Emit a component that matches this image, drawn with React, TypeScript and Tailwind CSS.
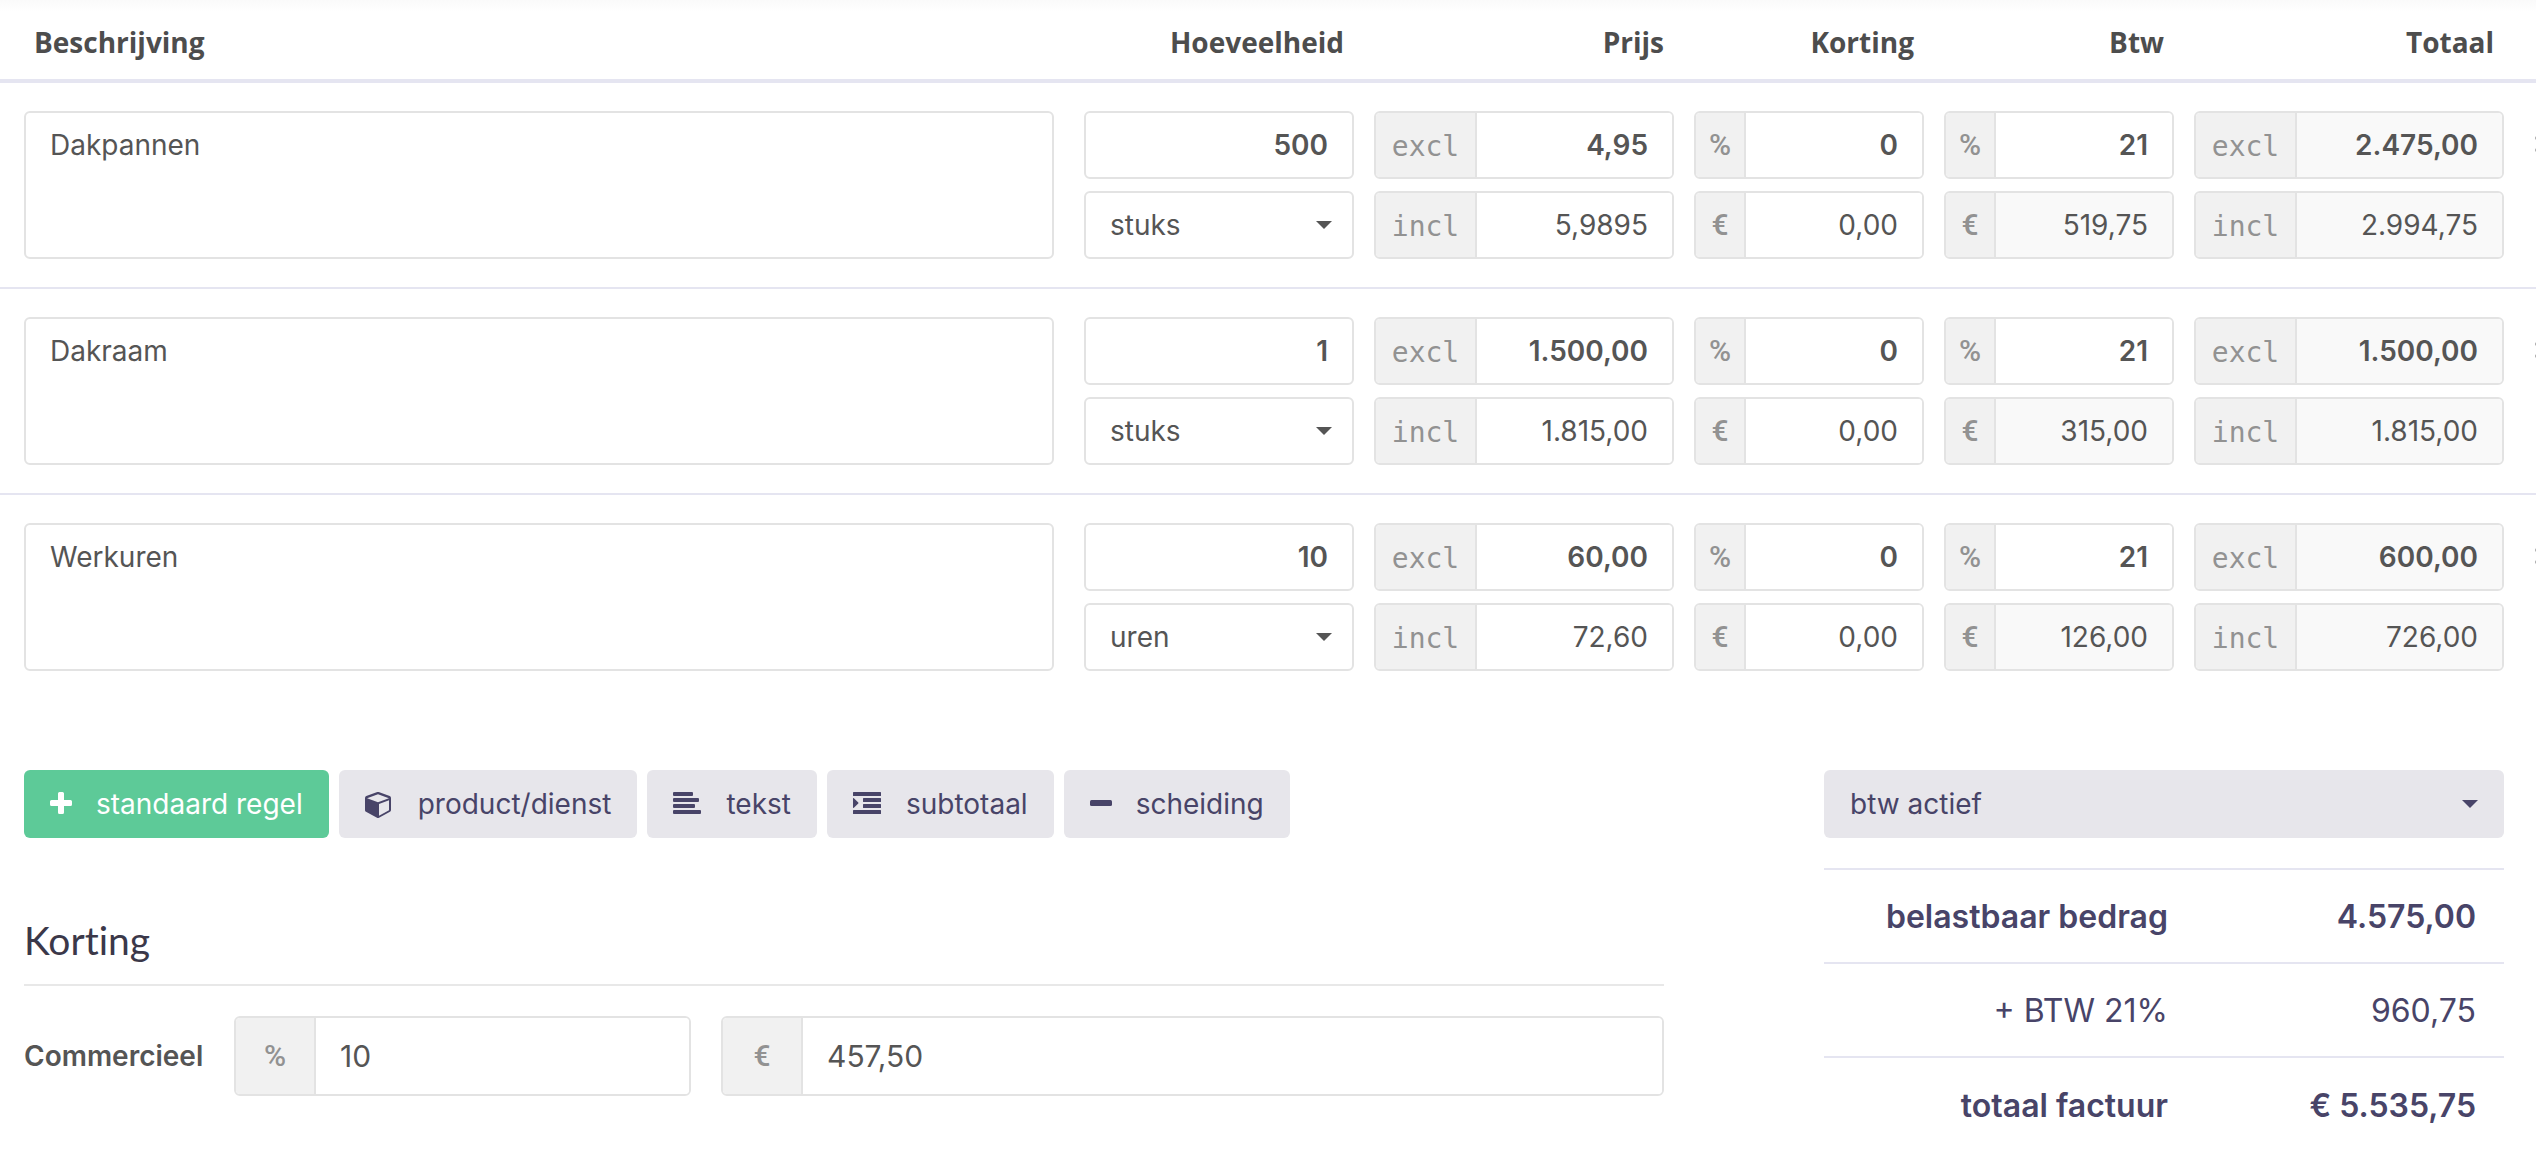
import { useState } from "react";
import clsx from "clsx";

interface ILine {
  id: number;
  description: string;
  quantity: string;
  unit: string;
  priceExcl: string;
  priceIncl: string;
  discountPercent: string;
  discountAmount: string;
  vatPercent: string;
  vatAmount: string;
  totalExcl: string;
  totalIncl: string;
}

const LINES: ILine[] = [
  {
    id: 1,
    description: "Dakpannen",
    quantity: "500",
    unit: "stuks",
    priceExcl: "4,95",
    priceIncl: "5,9895",
    discountPercent: "0",
    discountAmount: "0,00",
    vatPercent: "21",
    vatAmount: "519,75",
    totalExcl: "2.475,00",
    totalIncl: "2.994,75",
  },
  {
    id: 2,
    description: "Dakraam",
    quantity: "1",
    unit: "stuks",
    priceExcl: "1.500,00",
    priceIncl: "1.815,00",
    discountPercent: "0",
    discountAmount: "0,00",
    vatPercent: "21",
    vatAmount: "315,00",
    totalExcl: "1.500,00",
    totalIncl: "1.815,00",
  },
  {
    id: 3,
    description: "Werkuren",
    quantity: "10",
    unit: "uren",
    priceExcl: "60,00",
    priceIncl: "72,60",
    discountPercent: "0",
    discountAmount: "0,00",
    vatPercent: "21",
    vatAmount: "126,00",
    totalExcl: "600,00",
    totalIncl: "726,00",
  },
];

const PlusIcon = () => (
  <svg viewBox="0 1 22 28" className="h-7 w-[22px]" fill="currentColor" aria-hidden="true">
    <path d="M22 12.500v3a1.500 1.500 0 0 1-1.500 1.500H14v6.500a1.500 1.500 0 0 1-1.500 1.500h-3A1.500 1.500 0 0 1 8 23.500V17H1.500A1.500 1.500 0 0 1 0 15.500v-3A1.500 1.500 0 0 1 1.500 11H8V4.500A1.500 1.500 0 0 1 9.500 3h3A1.500 1.500 0 0 1 14 4.500V11h6.500a1.500 1.500 0 0 1 1.500 1.500z" />
  </svg>
);

const CubeIcon = () => (
  <svg viewBox="0 0 29 28" className="h-7 w-[29px]" fill="currentColor" aria-hidden="true">
    <path
      fillRule="evenodd"
      d="M14 25.700 24 20.300V10.300L14 14zM13 12.200 23.900 8.300 13 4.300 2.100 8.300zM26 8v12a2 2 0 0 1-1 1.800l-11 6a2 2 0 0 1-2 0l-11-6A2 2 0 0 1 0 20V8a2 2 0 0 1 1.300-1.900l11-4a2 2 0 0 1 1.400 0l11 4A2 2 0 0 1 26 8z"
    />
  </svg>
);

const AlignLeftIcon = () => (
  <svg viewBox="0 1 29 28" className="h-7 w-[29px]" fill="currentColor" aria-hidden="true">
    <rect x="0" y="3" width="20" height="4" rx="1" />
    <rect x="0" y="9" width="26" height="4" rx="1" />
    <rect x="0" y="15" width="22" height="4" rx="1" />
    <rect x="0" y="21" width="28" height="4" rx="1" />
  </svg>
);

const IndentIcon = () => (
  <svg viewBox="0 1 29 28" className="h-7 w-[29px]" fill="currentColor" aria-hidden="true">
    <rect x="0" y="3" width="28" height="4" rx="0.5" />
    <rect x="10" y="9" width="18" height="4" rx="0.5" />
    <rect x="10" y="15" width="18" height="4" rx="0.5" />
    <rect x="0" y="21" width="28" height="4" rx="0.5" />
    <path d="M5.300 14.400.900 18.800c-.4.400-.9.200-.9-.3v-9c0-.5.500-.7.900-.3l4.400 4.400c.2.200.2.600 0 .8z" />
  </svg>
);

const MinusIcon = () => (
  <svg viewBox="0 1 22 28" className="h-7 w-[22px]" fill="currentColor" aria-hidden="true">
    <rect x="0" y="11" width="22" height="6" rx="1.5" />
  </svg>
);

const ACTIONS = [
  { label: "standaard regel", icon: <PlusIcon />, primary: true },
  { label: "product/dienst", icon: <CubeIcon />, primary: false },
  { label: "tekst", icon: <AlignLeftIcon />, primary: false },
  { label: "subtotaal", icon: <IndentIcon />, primary: false },
  { label: "scheiding", icon: <MinusIcon />, primary: false },
];

const Caret = ({ className }: { className: string }) => (
  <svg
    viewBox="0 0 16 8"
    className={clsx("pointer-events-none absolute top-1/2 h-2 w-4 -translate-y-1/2", className)}
    fill="currentColor"
    aria-hidden="true"
  >
    <path d="M0 0h16L8 8z" />
  </svg>
);

interface IFieldProps {
  label: string;
  addon: string;
  value: string;
  wide?: boolean;
  bold?: boolean;
  readOnly?: boolean;
}

const Field = ({ label, addon, value, wide, bold, readOnly }: IFieldProps) => (
  <label className="flex h-[68px] overflow-hidden rounded-md border-2 border-[#e3e3e3]">
    <span
      className={clsx(
        "flex shrink-0 items-center justify-center border-r-2 border-[#e3e3e3] bg-[#f1f1f1] text-[#929292]",
        wide
          ? "w-[101px] pt-1 font-['DejaVu_Sans_Mono',monospace]"
          : "w-[50px] font-['Roboto',sans-serif] text-[30px] font-medium"
      )}
    >
      {addon}
    </span>
    <input
      aria-label={label}
      defaultValue={value}
      readOnly={readOnly}
      className={clsx(
        "w-full min-w-0 px-6 text-right outline-none",
        bold && "font-semibold",
        readOnly ? "bg-[#f9f9f9]" : "bg-white"
      )}
    />
  </label>
);

const LineRow = ({ line }: { line: ILine }) => (
  <tr className="border-b-2 border-[#e5e5f1] align-top last:border-b-0">
    <td className="py-7 pl-6 pr-[30px]">
      <textarea
        aria-label="Beschrijving"
        defaultValue={line.description}
        className="block h-[148px] w-full resize-none rounded-md border-2 border-[#e3e3e3] bg-white px-6 py-3 outline-none"
      />
    </td>
    <td className="py-7 pr-5">
      <div className="flex flex-col gap-3">
        <input
          aria-label="Hoeveelheid"
          defaultValue={line.quantity}
          className="h-[68px] w-full rounded-md border-2 border-[#e3e3e3] bg-white px-6 text-right font-semibold outline-none"
        />
        <div className="relative">
          <select
            aria-label="Eenheid"
            defaultValue={line.unit}
            className="h-[68px] w-full appearance-none rounded-md border-2 border-[#e3e3e3] bg-white px-6 outline-none"
          >
            <option>stuks</option>
            <option>uren</option>
          </select>
          <Caret className="right-[22px]" />
        </div>
      </div>
    </td>
    <td className="py-7 pr-5">
      <div className="flex flex-col gap-3">
        <Field label="Prijs excl" addon="excl" value={line.priceExcl} wide bold />
        <Field label="Prijs incl" addon="incl" value={line.priceIncl} wide />
      </div>
    </td>
    <td className="py-7 pr-5">
      <div className="flex flex-col gap-3">
        <Field label="Korting %" addon="%" value={line.discountPercent} bold />
        <Field label="Korting €" addon="€" value={line.discountAmount} />
      </div>
    </td>
    <td className="py-7 pr-5">
      <div className="flex flex-col gap-3">
        <Field label="Btw %" addon="%" value={line.vatPercent} bold />
        <Field label="Btw €" addon="€" value={line.vatAmount} readOnly />
      </div>
    </td>
    <td className="py-7">
      <div className="flex flex-col gap-3">
        <Field label="Totaal excl" addon="excl" value={line.totalExcl} wide bold readOnly />
        <Field label="Totaal incl" addon="incl" value={line.totalIncl} wide readOnly />
      </div>
    </td>
    <td className="overflow-hidden py-7 pl-[30px]">
      <button type="button" aria-label="Verplaatsen" className="flex h-[68px] items-center text-[#aaaaaa]">
        <svg viewBox="0 0 20 28" className="h-7 w-5 shrink-0" fill="currentColor" aria-hidden="true">
          <circle cx="3" cy="7" r="2" />
          <circle cx="3" cy="19" r="2" />
          <circle cx="13" cy="7" r="2" />
          <circle cx="13" cy="19" r="2" />
        </svg>
      </button>
    </td>
  </tr>
);

const App = () => {
  const [vat, setVat] = useState("btw actief");

  return (
    <div className="overflow-hidden bg-linear-to-b from-[#fafafa] to-white to-[12px] font-['Inter',sans-serif] text-[28px] leading-10 text-[#555555]">
      <table className="w-full table-fixed border-collapse">
        <colgroup>
          <col />
          <col className="w-[290px]" />
          <col className="w-[320px]" />
          <col className="w-[250px]" />
          <col className="w-[250px]" />
          <col className="w-[310px]" />
          <col className="w-8" />
        </colgroup>
        <thead className="font-['Open_Sans',sans-serif] text-[#4d4d4d]">
          <tr className="h-[81px] border-b-4 border-[#e5e5f1]">
            <th className="pl-[34px] pt-1 text-left">Beschrijving</th>
            <th className="pr-[30px] pt-1 text-right">Hoeveelheid</th>
            <th className="pr-[30px] pt-1 text-right">Prijs</th>
            <th className="pr-[30px] pt-1 text-right">Korting</th>
            <th className="pr-[30px] pt-1 text-right">Btw</th>
            <th className="pr-[10px] pt-1 text-right">Totaal</th>
            <th />
          </tr>
        </thead>
        <tbody>
          {LINES.map((line) => (
            <LineRow key={line.id} line={line} />
          ))}
        </tbody>
      </table>

      <div className="mt-[71px] flex items-start justify-between gap-40 pl-6 pr-8">
        <div className="min-w-0 flex-1">
          <div className="flex gap-[10px]">
            {ACTIONS.map((action) => (
              <button
                key={action.label}
                type="button"
                className={clsx(
                  "flex h-[68px] items-center gap-6 whitespace-nowrap rounded-md px-[26px]",
                  action.primary ? "bg-[#5dca98] text-white" : "bg-[#e7e6eb] text-[#484468]"
                )}
              >
                {action.icon}
                {action.label}
              </button>
            ))}
          </div>

          <h2 className="mt-[78px] border-b-2 border-[#e8e8e8] pb-5 font-['Lato',sans-serif] text-[39px] leading-[48px] text-[#3b3849] [font-variant-ligatures:none]">
            Korting
          </h2>
          <div className="mt-[30px] flex items-center text-[30px]">
            <span className="w-[210px] shrink-0 text-[28px] font-semibold">Commercieel</span>
            <label className="flex h-20 w-[457px] overflow-hidden rounded-md border-2 border-[#e3e3e3]">
              <span className="flex w-20 shrink-0 items-center justify-center border-r-2 border-[#e3e3e3] bg-[#f1f1f1] font-['Roboto',sans-serif] font-medium text-[#929292]">
                %
              </span>
              <input aria-label="Korting %" defaultValue="10" className="w-full min-w-0 bg-white px-6 outline-none" />
            </label>
            <label className="ml-[30px] flex h-20 flex-1 overflow-hidden rounded-md border-2 border-[#e3e3e3]">
              <span className="flex w-20 shrink-0 items-center justify-center border-r-2 border-[#e3e3e3] bg-[#f1f1f1] font-['Roboto',sans-serif] font-medium text-[#929292]">
                €
              </span>
              <input aria-label="Korting €" defaultValue="457,50" className="w-full min-w-0 bg-white px-6 outline-none" />
            </label>
          </div>
        </div>

        <div className="w-[680px] shrink-0 text-[#484468]">
          <div className="relative">
            <select
              aria-label="Btw"
              value={vat}
              onChange={(e) => setVat(e.target.value)}
              className="h-[68px] w-full appearance-none rounded-md bg-[#e7e6eb] px-[26px] outline-none"
            >
              <option>btw actief</option>
              <option>btw verlegd</option>
            </select>
            <Caret className="right-[26px]" />
          </div>
          <table className="mt-[30px] w-full border-collapse text-right text-[32px]">
            <tbody>
              <tr className="h-[94px] border-t-2 border-[#e5e5f1] font-semibold">
                <th className="w-[344px] pt-0.5 font-semibold">belastbaar bedrag</th>
                <td className="pr-7 pt-0.5">4.575,00</td>
              </tr>
              <tr className="h-[94px] border-t-2 border-[#e5e5f1]">
                <th className="pt-0.5 font-normal">+ BTW 21%</th>
                <td className="pr-7 pt-0.5">960,75</td>
              </tr>
              <tr className="h-[94px] border-t-2 border-[#e5e5f1] font-semibold">
                <th className="pt-0.5 font-semibold">totaal factuur</th>
                <td className="pr-7 pt-0.5">€ 5.535,75</td>
              </tr>
            </tbody>
          </table>
        </div>
      </div>
    </div>
  );
};

export default App;
